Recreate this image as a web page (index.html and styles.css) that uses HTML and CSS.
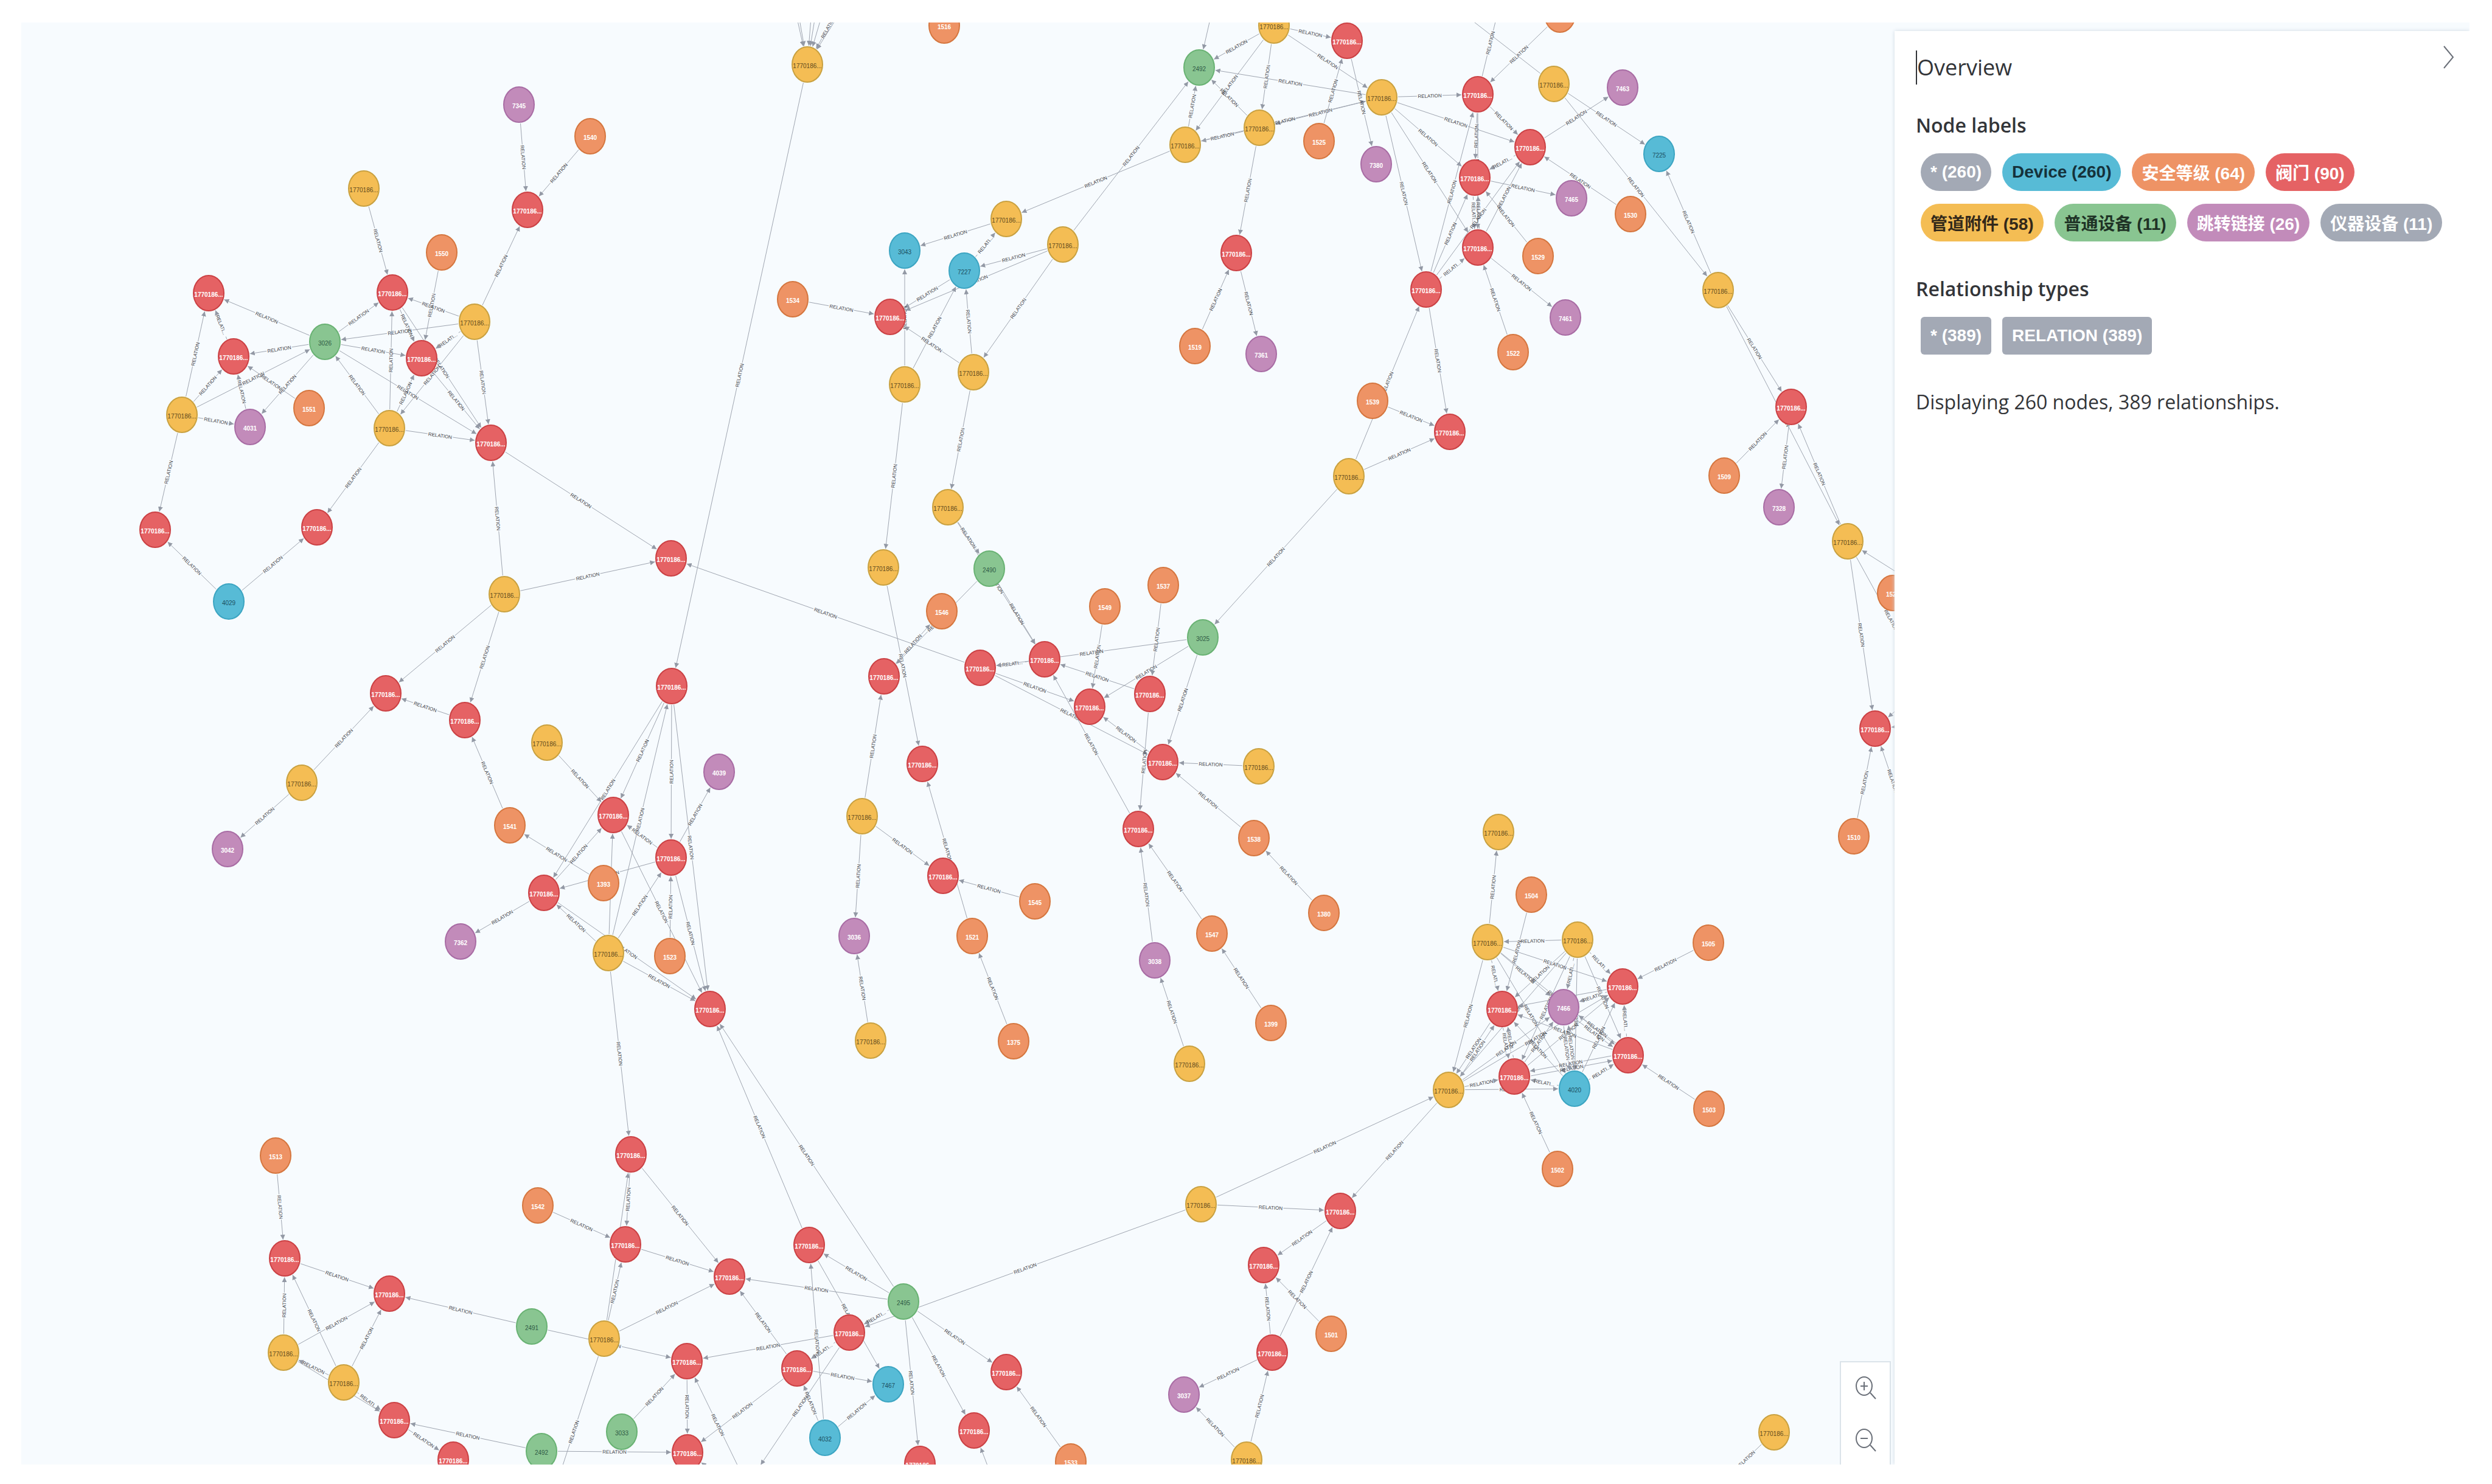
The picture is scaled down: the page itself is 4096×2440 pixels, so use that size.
FILE: index.html
```html
<!DOCTYPE html>
<html lang="zh-CN">
<head>
    <meta charset="UTF-8">
    <meta name="viewport" content="width=device-width, initial-scale=1.0">
    <title>Graph</title>
    <link rel="stylesheet" href="styles.css">
</head>
<body>

    <div class="frame">
        <main class="graph">
            <svg id="canvas" class="canvas" viewBox="35 37 3080 2371" preserveAspectRatio="xMinYMin slice">
                <defs>
                    <marker id="arrow" viewBox="0 0 8 8" refX="8" refY="4" markerWidth="8" markerHeight="8" markerUnits="userSpaceOnUse" orient="auto">
                        <path class="arrow" d="M0 0 L8 4 L0 8 Z"/>
                    </marker>
                </defs>
                <g id="edges"></g>
                <g id="nodes"></g>
            </svg>
            <div class="zoom">
                <button type="button" aria-label="Zoom in">
                    <svg viewBox="0 0 40 44"><ellipse cx="18" cy="20" rx="13" ry="15"/><path d="M12 20h12M18 13v14M28 31l9 10"/></svg>
                </button>
                <button type="button" aria-label="Zoom out">
                    <svg viewBox="0 0 40 44"><ellipse cx="18" cy="20" rx="13" ry="15"/><path d="M12 20h12M28 31l9 10"/></svg>
                </button>
            </div>
        </main>

        <aside class="panel">
            <div class="panel-head">
                <h1>Overview</h1>
                <button type="button" class="collapse" aria-label="Collapse">
                    <svg viewBox="0 0 20 38"><path d="M2 1l15 18L2 37"/></svg>
                </button>
            </div>

            <h2>Node labels</h2>
            <div class="chips">
                <button type="button" class="chip gray">* (260)</button>
                <button type="button" class="chip blue">Device (260)</button>
                <button type="button" class="chip orange">安全等级 (64)</button>
                <button type="button" class="chip red">阀门 (90)</button>
                <button type="button" class="chip yellow">管道附件 (58)</button>
                <button type="button" class="chip green">普通设备 (11)</button>
                <button type="button" class="chip purple">跳转链接 (26)</button>
                <button type="button" class="chip gray">仪器设备 (11)</button>
            </div>

            <h2>Relationship types</h2>
            <div class="chips">
                <button type="button" class="chip square gray">* (389)</button>
                <button type="button" class="chip square gray">RELATION (389)</button>
            </div>

            <p>Displaying 260 nodes, 389 relationships.</p>
        </aside>
    </div>

<script src="graph.js"></script>
</body>
</html>
```
FILE: styles.css
```css
body {
    font-family: 'Open Sans', 'Noto Sans CJK SC', sans-serif;
    background-color: #ffffff;
    color: #333539;
    margin: 0;
    padding: 37px 37px 32px 35px;
    height: 100vh;
    box-sizing: border-box;
    overflow: hidden;
}

.frame {
    display: flex;
    height: 100%;
    background-color: #f7fbfe;
    overflow: hidden;
}

.graph {
    position: relative;
    flex: 1;
    min-width: 0;
}

.canvas {
    display: block;
    width: 100%;
    height: 100%;
}

/* edges */
.line {
    stroke: #9fa5b0;
    stroke-width: 1;
    fill: none;
}

.arrow {
    fill: #9399a5;
}

.edge-label {
    font-family: 'Liberation Sans', sans-serif;
    font-size: 8px;
    fill: #3f4248;
    text-anchor: middle;
}

/* nodes */
.node ellipse {
    stroke-width: 2;
}

.node text {
    font-family: 'Liberation Sans', sans-serif;
    font-size: 10px;
    font-weight: bold;
    text-anchor: middle;
    fill: #ffffff;
}

.node.R ellipse { fill: #e56264; stroke: #cb4144; }
.node.O ellipse { fill: #ee9365; stroke: #d5763f; }
.node.P ellipse { fill: #c28bba; stroke: #a86ca4; }
.node.Y ellipse { fill: #f4bd54; stroke: #c9a140; }
.node.G ellipse { fill: #89c591; stroke: #69b273; }
.node.B ellipse { fill: #57bbd6; stroke: #3ca5c2; }
.node.Y text { fill: #5f4a1c; font-weight: normal; }
.node.G text { fill: #2f5a45; font-weight: normal; }
.node.B text { fill: #1c4f60; font-weight: normal; }

/* zoom buttons */
.zoom {
    display: flex;
    flex-direction: column;
    gap: 4px;
    position: absolute;
    right: 6px;
    bottom: 0;
    width: 80px;
    border: 2px solid #dbe3ea;
    border-bottom: none;
    background-color: #ffffff;
}

.zoom button {
    display: flex;
    justify-content: center;
    align-items: center;
    width: 100%;
    height: 82px;
    padding: 0;
    border: none;
    background: none;
    cursor: pointer;
}

.zoom svg {
    width: 40px;
    height: 44px;
    fill: none;
    stroke: #6b7079;
    stroke-width: 2;
}

/* side panel */
.panel {
    flex: 0 0 945px;
    box-sizing: border-box;
    margin-top: 14px;
    padding: 32px 24px 0 35px;
    background-color: #ffffff;
    box-shadow: 0 0 6px #cfd9e2;
    position: relative;
}

.panel-head {
    display: flex;
    justify-content: space-between;
}

h1 {
    margin: 0;
    font-size: 36px;
    font-weight: normal;
    line-height: 56px;
    border-left: 2px solid #333539;
}

h2 {
    margin: 56px 0 24px;
    font-size: 32px;
    font-weight: 600;
    line-height: 44px;
}

.panel-head + h2 {
    margin-top: 45px;
}

.collapse {
    display: flex;
    align-items: flex-start;
    width: 20px;
    height: 32px;
    margin-top: -8px;
    padding: 0;
    border: none;
    background: none;
    cursor: pointer;
}

.collapse svg {
    width: 20px;
    height: 38px;
    flex: none;
    fill: none;
    stroke: #6b7079;
    stroke-width: 2;
}

.chips {
    display: flex;
    flex-wrap: wrap;
    gap: 21px 18px;
    margin-left: 8px;
}

.chip {
    height: 62px;
    padding: 0 16px;
    border: none;
    border-radius: 31px;
    font-family: 'Liberation Sans', 'Noto Sans CJK SC', sans-serif;
    font-size: 28px;
    font-weight: bold;
    color: #ffffff;
    cursor: pointer;
}

.chip.square {
    border-radius: 6px;
}

.chip.gray { background-color: #a3a9b5; }
.chip.blue { background-color: #57bbd6; color: #15323b; }
.chip.orange { background-color: #ee9365; }
.chip.red { background-color: #e56264; }
.chip.yellow { background-color: #f4bd54; color: #33291a; }
.chip.green { background-color: #89c591; color: #1f3326; }
.chip.purple { background-color: #c28bba; }

p {
    margin: 56px 0 0;
    font-size: 32px;
    line-height: 44px;
}
```
FILE: graph.js
```javascript
// id kind x y label (kind "-" is a node outside the visible canvas)
var nodeData = `
a1 P 853 172 7345
a2 O 970 224 1540
a3 R 867 345
a4 Y 598 310
a5 O 726 415 1550
a6 R 645 481
a7 Y 780 529
a8 R 343 482
a9 G 534 562 3026
a10 R 384 586
a11 R 693 589
a12 Y 299 682
a13 P 411 702 4031
a14 O 508 671 1551
a15 Y 640 704
a16 R 807 728
b1 R 255 871
b2 R 521 867
b3 B 376 989 4029
b4 Y 829 977
b5 R 634 1140
b6 R 764 1184
b7 Y 496 1287
b8 P 374 1396 3042
b9 Y 899 1221
b10 O 838 1357 1541
b11 R 1008 1340
b12 O 992 1452 1393
b13 R 894 1468
b14 P 757 1548 7362
b15 Y 1000 1567
c1 R 1103 918
c2 R 1104 1128
c3 P 1182 1269 4039
c4 R 1103 1410
c5 O 1101 1572 1523
c6 Y 1452 933
c7 Y 1558 834
c8 G 1626 935 2490
c9 O 1548 1005 1546
c10 R 1453 1112
c11 R 1611 1098
c12 R 1717 1084
c13 O 1816 997 1549
c14 O 1912 962 1537
c15 G 1977 1048 3025
c16 R 1791 1162
c17 R 1890 1141
c18 R 1911 1253
c19 Y 2069 1260
c20 R 1516 1256
c21 Y 1417 1342
c22 R 1550 1440
c23 O 1701 1482 1545
c24 P 1404 1539 3036
c25 O 1598 1539 1521
c26 R 1871 1363
c27 O 2061 1378 1538
c28 O 1992 1535 1547
c29 P 1898 1579 3038
d1 Y 1327 106
d2 O 1552 42 1516
d3 G 1971 111 2492
d4 Y 2094 42
d5 Y 2070 210
d6 Y 1948 238
d7 Y 1654 360
d8 Y 1747 402
d9 B 1487 412 3043
d10 B 1585 445 7227
d11 O 1303 492 1534
d12 R 1463 521
d13 Y 1487 632
d14 Y 1600 612
d15 R 2032 416
d16 O 1964 569 1519
d17 P 2073 582 7361
e1 R 2214 67
e2 Y 2271 160
e3 O 2168 232 1525
e4 P 2262 270 7380
e5 R 2429 155
e6 R 2515 242
e7 R 2424 292
e8 R 2429 407
e9 R 2344 476
e10 Y 2554 138
e11 P 2667 144 7463
e12 B 2727 253 7225
e13 P 2583 326 7465
e14 O 2680 352 1530
e15 O 2528 421 1529
e16 P 2573 522 7461
e17 O 2487 579 1522
e18 O 2256 659 1539
e19 R 2383 710
e20 Y 2217 783
e21 Y 2824 477
e22 R 2944 669
e23 O 2834 782 1509
e24 P 2924 834 7328
e25 Y 3037 890
e26 O 3111 975 1520
e27 R 3082 1198
e28 O 3047 1375 1510
e29 O 2564 24
f1 Y 2463 1368
f2 O 2517 1471 1504
f3 Y 2445 1549
f4 Y 2593 1545
f5 O 2808 1550 1505
f6 O 2176 1501 1380
f7 R 2667 1622
f8 R 2469 1659
f9 P 2570 1656 7466
f10 R 2676 1735
f11 R 2489 1770
f12 B 2588 1790 4020
f13 Y 2381 1792
f14 O 2809 1823 1503
f15 O 2560 1922 1502
f16 R 2203 1991
f17 O 2188 2193 1501
f18 Y 2916 2355
h1 R 1167 1659
h2 Y 1431 1711
h3 O 1666 1712 1375
h4 Y 1955 1749
h5 O 2089 1682 1399
h6 Y 1974 1980
h7 R 2077 2080
h8 R 1330 2047
h9 R 1199 2099
h10 G 1485 2140 2495
h11 R 1396 2191
h12 R 2091 2224
h13 R 1129 2238
h14 R 1310 2250
h15 B 1460 2276 7467
h16 P 1946 2293 3037
h17 R 1654 2256
h18 R 1601 2352
h19 B 1356 2364 4032
h20 R 1130 2388
h21 R 1512 2407
h22 O 1760 2403 1533
h23 Y 2049 2400
i1 O 453 1900 1513
i2 R 468 2069
i3 R 640 2127
i4 Y 466 2224
i5 Y 565 2273
i6 R 648 2335
i7 R 745 2400
i8 G 874 2181 2491
i9 G 890 2386 2492
i10 G 1022 2354 3033
i11 Y 993 2201
i12 R 1028 2046
i13 R 1037 1898
i14 O 884 1982 1542
g1 - 1290 -60
g2 - 1298 -60
g3 - 1340 -60
g4 - 1354 -60
g5 - 1376 -60
g6 - 1395 -16
g7 - 1432 -60
g8 - 2010 -60
g9 - 2470 -14
g10 - 2200 -137
g11 - 3200 993
g12 - 3180 1150
g13 - 3160 1130
g14 - 3170 1190
g15 - 3140 1370
g16 - 2822 2445
g17 - 893 2507
g18 - 1234 2433
g19 - 1231 2448
g20 - 1650 2480
g21 - 1200 2440
`;

// source-target pairs
var edgeData = `
a1-a3 a2-a3 a4-a6 a5-a11 a7-a3 a7-a6 a7-a9 a7-a11 a7-a15 a7-a16 a9-a8 a9-a6 a9-a10 a9-a11 a9-a13 a9-a16
a6-a11 a6-a16 a11-a16 a10-a8 a12-a8 a12-a10 a12-a9 a12-a13 a13-a10 a14-a10 a15-a9 a15-a6 a15-a11 a15-a16
a12-b1 a15-b2 a16-c1 b3-b1 b3-b2 b4-a16 b4-c1 b4-b5 b4-b6 b6-b5 b7-b5 b7-b8 b10-b6 b9-b11 b12-b10
c4-b13 b13-b11 b13-b14 b15-b13 b15-b11 b15-c4 b15-c2 c4-b11 c2-b11 c2-b13 c2-c4 c2-h1 c4-c3 c5-c4
c4-h1 b11-h1 b13-h1 b15-h1 b15-i13 d1-c2 c11-c1
d13-c6 d14-c7 c6-c20 c7-c8 c7-c12 c8-c12 c8-c10 c10-c9 c21-c10 c21-c22 c21-c24 c23-c22 c25-c20
c12-c11 c15-c11 c15-c16 c15-c18 c11-c16 c11-c18 c13-c16 c14-c17 c17-c12 c17-c26 c18-c16 c19-c18 c27-c18
c26-c12 c28-c26 c29-c26 f6-c27 h5-c28 h4-c29 h2-c24 h3-c25 e20-c15
g1-d1 g2-d1 g3-d1 g4-d1 g5-d1 g6-d1 g7-d1 g8-d3
d4-d3 d4-d6 d4-d5 e2-d3 d5-d3 d5-d6 d6-d3 d6-d7 d8-d3 d7-d9 d10-d7 d8-d10 d8-d12 d10-d12 d8-d14
d13-d9 d13-d10 d14-d10 d14-d12 d11-d12 d5-d15 d16-d15 d15-d17
d4-e1 d4-e2 e2-d5 d6-e2 e3-e1 e1-e4 e2-e5 e2-e6 e2-e7 e2-e8 e2-e9 e5-g9 e29-e5 e5-e6 e5-e7 e5-e8
e7-e8 e8-e7 e6-e7 e6-e11 e7-e13 e14-e6 e15-e7 e8-e16 e17-e8 e9-e5 e9-e7 e9-e6 e9-e8 e8-e6 e9-e19
e20-e9 e18-e19 e20-e19 e10-g10 e10-e12 e10-e21 e21-e12 e21-e22 e21-e25 e25-e22 e23-e22 e22-e24
e25-e27 e25-g12 g11-e25 e28-e27 g13-e27 g14-e27 g15-e27
f3-f1 f4-f3 f2-f8 f5-f7 f3-f7 f3-f8 f3-f9 f3-f10 f3-f12 f3-f13 f4-f7 f4-f8 f4-f9 f4-f10 f4-f11 f4-f12 f4-f13
f13-f8 f8-f13 f13-f9 f13-f7 f13-f11 f13-f12 f8-f11 f11-f8 f11-f9 f11-f7 f11-f10 f10-f11 f12-f8 f12-f9
f9-f12 f12-f11 f12-f10 f12-f7 f10-f8 f10-f9 f9-f10 f10-f7 f7-f9 f7-f8 f14-f10 f15-f11
h6-f13 h6-f16 f13-f16 f16-h7 h12-h7 h12-f16 h12-h16 h23-h12 h23-h16 f17-h7 f18-g16
h8-h1 h10-h1 h10-h8 h10-h9 h10-h11 h6-h11 h10-h17 h10-h18 h10-h21 h11-h13 h11-h14 h11-g18 h8-h15
h14-h9 h14-h15 h14-h20 h19-h8 h19-h14 h19-h15 h13-h20 g19-h13 g20-h18 g21-h20 h22-h17
i1-i2 i2-i3 i4-i2 i4-i3 i5-i2 i5-i3 i5-i4 i4-i6 i5-i6 i6-i7 i8-i3 i8-h13 i9-i6 i9-h20 i10-h13
i11-i12 i11-i13 i13-i12 i14-i12 i12-h9 i13-h9 i11-h9 i11-g17
`;

var RX = 25;
var RY = 29;
var nodes = {};

function add(parent, name, attrs, text) {
    var el = document.createElementNS('http://www.w3.org/2000/svg', name);
    for (var key in attrs) {
        el.setAttribute(key, attrs[key]);
    }
    if (text) {
        el.textContent = text;
    }
    parent.appendChild(el);
    return el;
}

nodeData.trim().split('\n').forEach(function(row) {
    var p = row.split(' ');
    var long = p[1] === 'R' || p[1] === 'Y';
    nodes[p[0]] = { kind: p[1], x: +p[2], y: +p[3], label: p[4] || (long ? '1770186...' : '') };
});

var edgeList = edgeData.trim().split(/\s+/);
var edgeLayer = document.getElementById('edges');
var nodeLayer = document.getElementById('nodes');
var view = document.getElementById('canvas').viewBox.baseVal;

edgeList.forEach(function(pair) {
    var ids = pair.split('-');
    var a = nodes[ids[0]];
    var b = nodes[ids[1]];
    var dx = b.x - a.x;
    var dy = b.y - a.y;
    var len = Math.hypot(dx, dy);
    var ux = dx / len;
    var uy = dy / len;

    // two-way pairs run side by side
    var shift = edgeList.indexOf(ids[1] + '-' + ids[0]) >= 0 ? 4 : 0;
    var ox = a.x - uy * shift;
    var oy = a.y + ux * shift;

    var rim = 1 / Math.hypot(ux / RX, uy / RY);
    var start = rim + 2;
    var end = len - rim - 2;
    var mid = (start + end) / 2;
    var label = end - start > 54 ? 'RELATION' : 'RELATI...';
    var gap = 21;
    function at(d) {
        return (ox + ux * d).toFixed(1) + ' ' + (oy + uy * d).toFixed(1);
    }

    // no label when there is no room, or when it would sit off the canvas
    var mx = ox + ux * mid;
    var my = oy + uy * mid;
    var hidden = mx > view.x + view.width || my < view.y || my > view.y + view.height;

    if (end - start < 32 || hidden) {
        add(edgeLayer, 'path', { class: 'line', d: 'M' + at(start) + 'L' + at(end), 'marker-end': 'url(#arrow)' });
        return;
    }
    if (mid - gap > start) {
        add(edgeLayer, 'path', { class: 'line', d: 'M' + at(start) + 'L' + at(mid - gap) });
    }
    add(edgeLayer, 'path', { class: 'line', d: 'M' + at(Math.min(mid + gap, end - 8)) + 'L' + at(end), 'marker-end': 'url(#arrow)' });

    var angle = Math.atan2(dy, dx) * 180 / Math.PI;
    if (angle > 90 || angle < -90) {
        angle += 180;
    }
    add(edgeLayer, 'text', { class: 'edge-label', y: 3, transform: 'translate(' + at(mid) + ') rotate(' + angle.toFixed(1) + ')' }, label);
});

Object.keys(nodes).forEach(function(id) {
    var n = nodes[id];
    if (n.kind === '-') {
        return;
    }
    var g = add(nodeLayer, 'g', { class: 'node ' + n.kind });
    add(g, 'ellipse', { cx: n.x, cy: n.y, rx: RX, ry: RY });
    if (n.label) {
        add(g, 'text', { x: n.x, y: n.y + 6 }, n.label);
    }
});
```
